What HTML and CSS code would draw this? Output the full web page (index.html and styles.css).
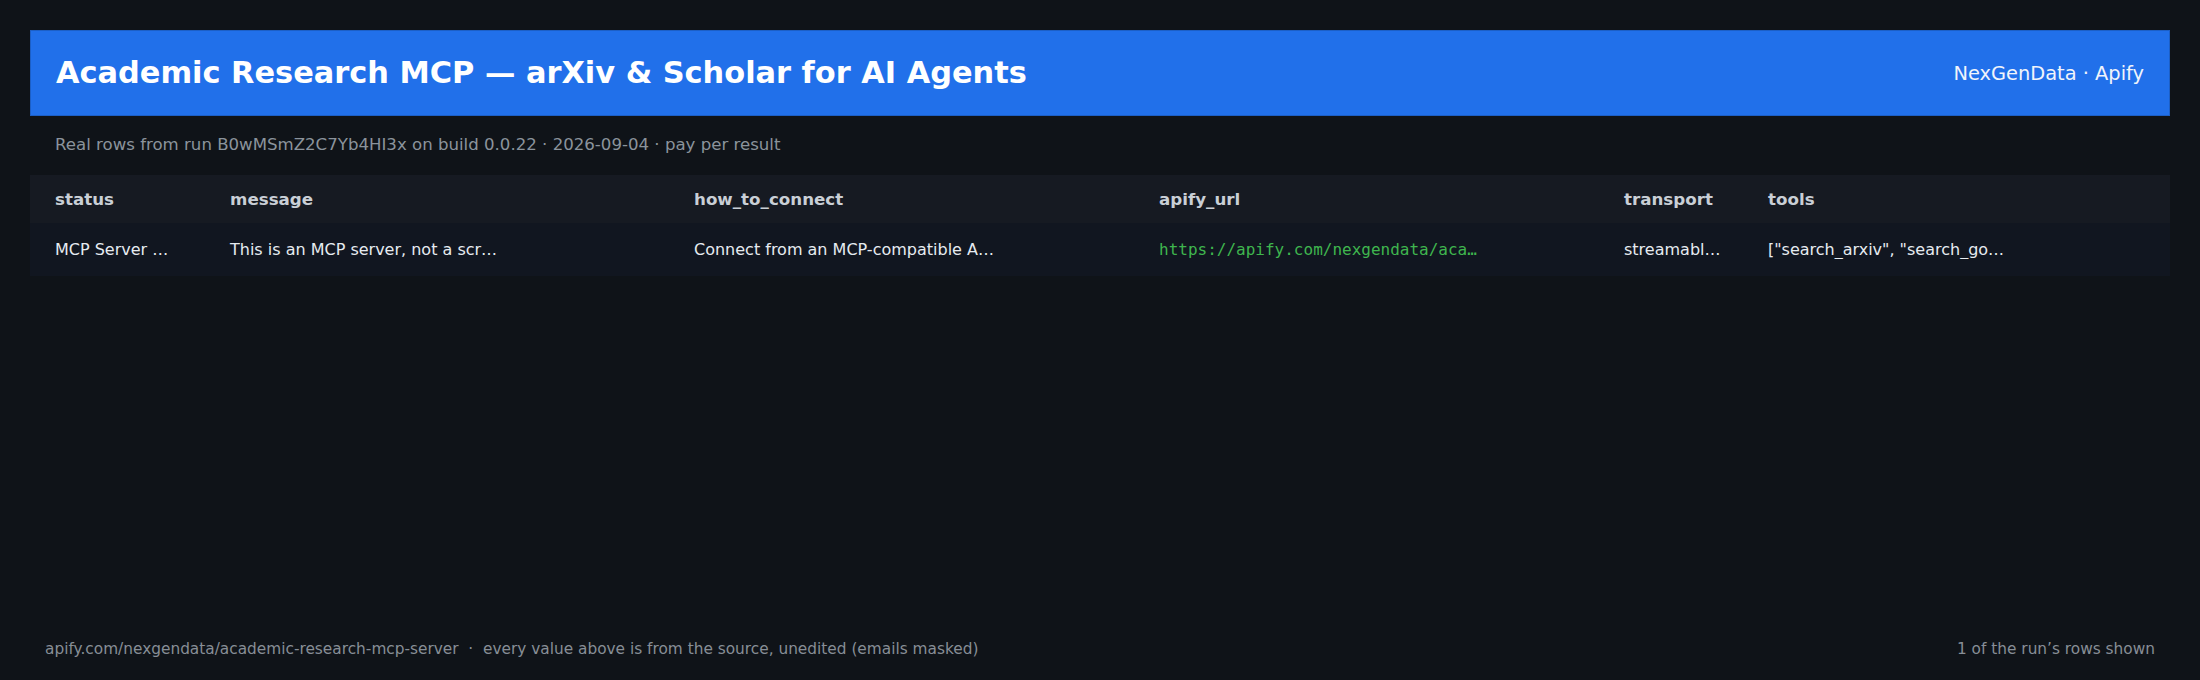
FILE: index.html
```html
<!DOCTYPE html>
<html lang="en">
<head>
<meta charset="utf-8">
<title>Academic Research MCP</title>
<link rel="stylesheet" href="styles.css">
</head>
<body>
<div class="page">
  <header class="banner">
    <h1 class="title">Academic Research MCP — arXiv &amp; Scholar for AI Agents</h1>
    <div class="brand">NexGenData · Apify</div>
  </header>
  <p class="subtitle">Real rows from run B0wMSmZ2C7Yb4HI3x on build 0.0.22 · 2026-09-04 · pay per result</p>
  <div class="table">
    <div class="row head">
      <div class="cell">status</div>
      <div class="cell">message</div>
      <div class="cell">how_to_connect</div>
      <div class="cell">apify_url</div>
      <div class="cell">transport</div>
      <div class="cell">tools</div>
    </div>
    <div class="row body">
      <div class="cell">MCP Server …</div>
      <div class="cell">This is an MCP server, not a scr…</div>
      <div class="cell">Connect from an MCP-compatible A…</div>
      <div class="cell url">https://apify.com/nexgendata/aca…</div>
      <div class="cell">streamabl…</div>
      <div class="cell">["search_arxiv", "search_go…</div>
    </div>
  </div>
  <footer class="foot">
    <span>apify.com/nexgendata/academic-research-mcp-server &nbsp;·&nbsp; every value above is from the source, unedited (emails masked)</span>
    <span>1 of the run’s rows shown</span>
  </footer>
</div>
</body>
</html>
```

FILE: styles.css
```css
* { box-sizing: border-box; }
html, body { margin: 0; padding: 0; }
body {
  background: #0f1318;
  font-family: "DejaVu Sans", "Liberation Sans", sans-serif;
  color: #e6edf3;
}
.page {
  display: flex;
  flex-direction: column;
  height: 680px;
  padding: 30px 30px 22px;
}
.banner {
  display: flex;
  align-items: center;
  justify-content: space-between;
  height: 86px;
  padding: 0 25px;
  background: #2170ea;
  border: 1px solid #1c5fc6;
}
.title {
  margin: 0 0 2px;
  font-size: 30.4px;
  font-weight: 700;
  color: #ffffff;
}
.brand {
  font-size: 19.4px;
  color: #f0f4fb;
}
.subtitle {
  margin: 0;
  padding: 0 25px;
  height: 59px;
  line-height: 58px;
  font-size: 16.6px;
  color: #8b939c;
}
.table {
  display: flex;
  flex-direction: column;
}
.row {
  display: grid;
  grid-template-columns: 175px 464px 465px 465px 144px 1fr;
  align-items: center;
}
.row.head {
  height: 48px;
  background: #161a22;
  font-weight: 700;
  color: #c9cfd6;
}
.row.head .cell { font-size: 16.7px; }
.row.body {
  height: 53px;
  background: #111620;
  color: #e6ebf0;
}
.cell {
  padding-left: 25px;
  font-size: 16px;
  white-space: nowrap;
  overflow: hidden;
}
.cell.url {
  font-family: "DejaVu Sans Mono", "Liberation Mono", monospace;
  color: #3fb54e;
}
.foot {
  margin-top: auto;
  display: flex;
  justify-content: space-between;
  padding: 0 15px;
  font-size: 15.35px;
  color: #878e96;
}
```
